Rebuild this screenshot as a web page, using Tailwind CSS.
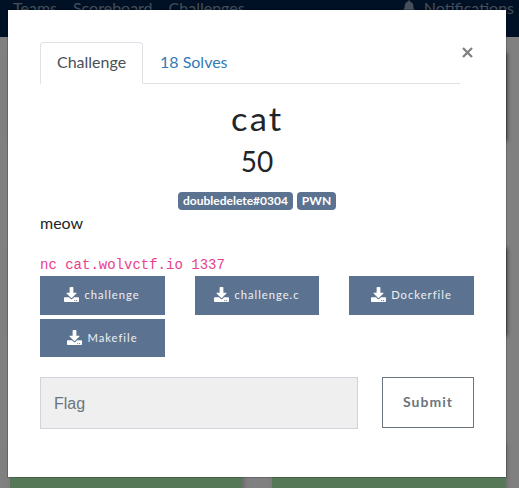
<!DOCTYPE html>
<html lang="en">
<head>
<meta charset="utf-8">
<title>Challenges</title>
<script src="https://cdn.jsdelivr.net/npm/@tailwindcss/browser@4"></script>
</head>
<body class="relative h-[488px] w-[519px] overflow-hidden bg-[#808080] font-['Lato',sans-serif] text-base leading-6 text-[#212529]">
<svg class="hidden"><symbol id="dl" viewBox="0 0 512 512"><path fill="currentColor" d="M216 0h80c13.300 0 24 10.700 24 24v168h87.700c17.800 0 26.700 21.500 14.100 34.100L269.700 378.300c-7.500 7.500-19.800 7.500-27.300 0L90.100 226.100c-12.600-12.600-3.700-34.100 14.100-34.100H192V24c0-13.300 10.700-24 24-24zm296 376v112c0 13.300-10.700 24-24 24H24c-13.300 0-24-10.700-24-24V376c0-13.300 10.700-24 24-24h146.700l49 49c20.100 20.100 52.500 20.100 72.600 0l49-49H488c13.300 0 24 10.700 24 24zm-124 88c0-11-9-20-20-20s-20 9-20 20 9 20 20 20 20-9 20-20zm64 0c0-11-9-20-20-20s-20 9-20 20 9 20 20 20 20-9 20-20z"/></symbol></svg>

<!-- page behind the dialog -->
<nav class="flex h-[37px] items-start bg-[#001125] pl-[13px] text-[#454e5a]">
  <div class="-mt-[4px] flex gap-4"><span>Teams</span><span>Scoreboard</span><span>Challenges</span></div>
  <div class="-mt-[4px] mr-[5px] ml-auto flex gap-[9px]">
    <svg class="mt-[4px] h-[14px] w-3" viewBox="0 0 448 512"><path fill="currentColor" d="M224 512c35.300 0 64-28.600 64-64H160c0 35.400 28.700 64 64 64zm215.400-149.700c-19.300-20.800-55.500-52-55.500-154.300 0-77.700-54.500-139.900-127.900-155.200V32a32 32 0 1 0-64 0v20.800C118.600 68.100 64.100 130.300 64.100 208c0 102.300-36.200 133.500-55.500 154.300C2.600 368.700 0 376.400 0 384c.100 16.400 13 32 32.100 32h383.800c19.100 0 32-15.600 32.100-32 0-7.600-2.700-15.300-8.600-21.700z"/></svg>
    <span>Notifications</span>
  </div>
</nav>
<div class="mt-[14px] ml-[10px] grid w-[495px] grid-cols-[232px_233px] gap-x-[30px] gap-y-[107px]">
  <div class="h-[88px] bg-[#577857] shadow-[2px_2px_4px_#333]"></div><div class="h-[88px] bg-[#577857] shadow-[2px_2px_4px_#333]"></div>
  <div class="h-[88px] bg-[#577857] shadow-[2px_2px_4px_#333]"></div><div class="h-[88px] bg-[#577857] shadow-[2px_2px_4px_#333]"></div>
  <div class="h-[47px] bg-[#577857] shadow-[2px_2px_4px_#666]"></div><div class="h-[47px] bg-[#577857] shadow-[2px_2px_4px_#666]"></div>
</div>

<main class="absolute top-[9px] left-[7px] h-[469px] w-[500px] border border-black/20 bg-white bg-clip-padding pt-8 pr-8 pl-8">
  <div class="flex h-[42px]">
    <div class="flex w-[420px] border-b border-[#dee2e6]">
      <div class="-mb-px h-[42px] w-[103px] rounded-t border border-b-white border-[#dee2e6] pt-[7px] pl-4 text-[#495057]">Challenge</div>
      <div class="pt-2 pl-[17px] text-[#337ab7]">18 Solves</div>
    </div>
    <button class="flex h-[21px] w-[14px] items-center justify-center text-[#808080]"><svg class="h-[11px] w-[11px]" viewBox="0 0 11 11"><path d="M1 1l9 9M10 1l-9 9" stroke="currentColor" stroke-width="2.300"/></svg></button>
  </div>
  <h2 class="mt-4 h-10 text-center text-[32px] leading-[38px] tracking-[2px]"><span class="inline-block scale-x-[1.08]">cat</span></h2>
  <h3 class="h-[42px] text-center text-[28px] leading-[42px]">50</h3>
  <div class="mt-[10px] flex h-[19px] justify-center gap-1 text-xs leading-[18px] font-bold text-white">
    <span class="h-[18px] w-[115px] rounded bg-[#5b7290] text-center">doubledelete#0304</span>
    <span class="h-[18px] w-[39px] rounded bg-[#5b7290] text-center">PWN</span>
  </div>
  <p class="h-6">meow</p>
  <p class="mt-4 h-[25px] font-['Liberation_Mono',monospace] text-[14px] leading-[28px] text-[#e83e8c]">nc cat.wolvctf.io 1337</p>
  <div class="grid grid-cols-[125px_124px_125px] gap-x-[30px] gap-y-1 text-[11.200px] leading-none tracking-[1px] text-white/90">
    <a class="flex h-[39px] items-center justify-center gap-[5px] bg-[#5b7290] pr-px pb-[2px]"><svg class="-mt-px h-[15px] w-[15px] text-white"><use href="#dl"/></svg>challenge</a>
    <a class="flex h-[39px] items-center justify-center gap-[5px] bg-[#5b7290] pb-[2px]"><svg class="-mt-px h-[15px] w-[15px] text-white"><use href="#dl"/></svg>challenge.c</a>
    <a class="flex h-[39px] items-center justify-center gap-[5px] bg-[#5b7290] pb-[2px]"><svg class="-mt-px h-[15px] w-[15px] text-white"><use href="#dl"/></svg>Dockerfile</a>
    <a class="flex h-[38px] items-center justify-center gap-[5px] bg-[#5b7290]"><svg class="-mt-px h-[15px] w-[15px] text-white"><use href="#dl"/></svg>Makefile</a>
  </div>
  <div class="mt-5 flex gap-6">
    <div class="h-[52px] w-[318px] border border-[#ced4da] bg-[#efefef] pl-[13px] font-['Liberation_Sans',sans-serif] leading-[51px] text-[#6c757d]">Flag</div>
    <button class="h-[51px] w-[92px] border border-[#6c757d] pb-px text-[14px] leading-[48px] font-bold tracking-[1px] text-[#6c757d]">Submit</button>
  </div>
</main>
</body>
</html>
